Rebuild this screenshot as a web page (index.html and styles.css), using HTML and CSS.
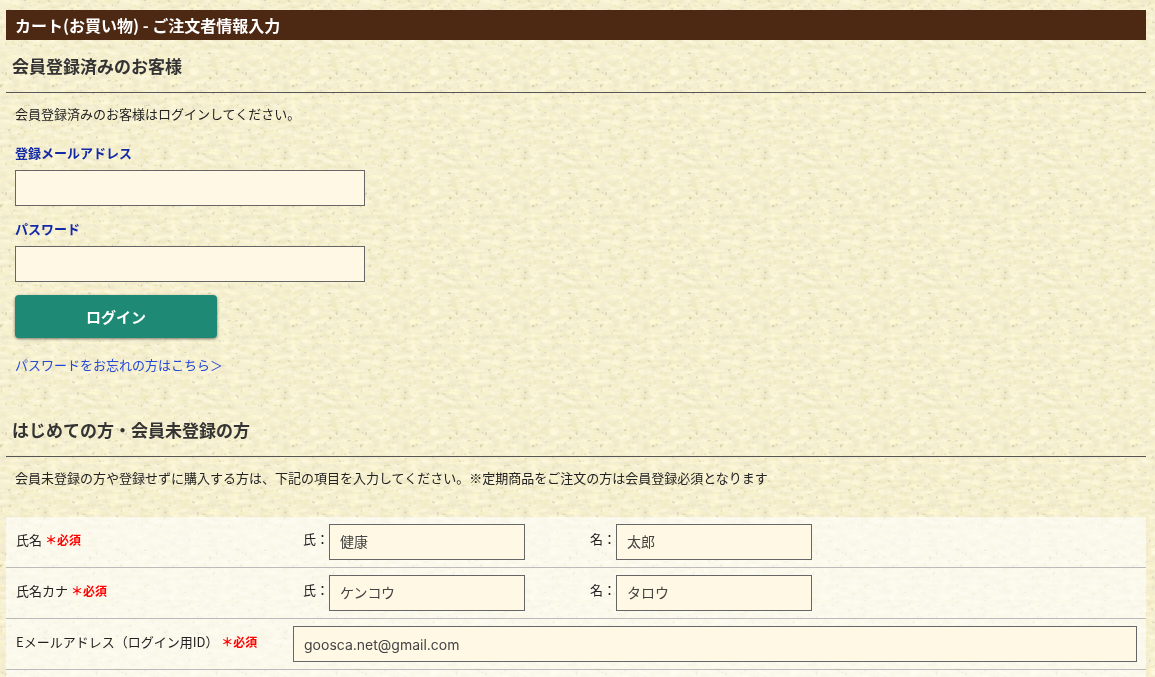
FILE: index.html
```html
<!DOCTYPE html>
<html lang="ja">
<head>
<meta charset="utf-8">
<meta name="viewport" content="width=device-width, initial-scale=1">
<title>カート(お買い物) - ご注文者情報入力</title>
<link rel="stylesheet" href="styles.css">
</head>
<body>
<svg class="paper" aria-hidden="true">
  <defs>
    <filter id="grain" x="0" y="0" width="100%" height="100%" color-interpolation-filters="sRGB">
      <feTurbulence type="fractalNoise" baseFrequency="0.1 0.2" numOctaves="3" seed="8" stitchTiles="stitch"/>
      <feColorMatrix values="0.1 0 0 0 0.913  0.11 0 0 0 0.885  0.12 0.1 0 0 0.705  0 0 0 0 1"/>
    </filter>
    <filter id="specks" x="0" y="0" width="100%" height="100%" color-interpolation-filters="sRGB">
      <feTurbulence type="fractalNoise" baseFrequency="0.25" numOctaves="3" seed="21" stitchTiles="stitch"/>
      <feColorMatrix values="0 0 0 0 0.7  0 0 0 0 0.66  0 0 0 0 0.52  2.6 0 0 0 -1.72"/>
    </filter>
    <pattern id="tile" width="120" height="120" patternUnits="userSpaceOnUse">
      <rect width="120" height="120" filter="url(#grain)"/>
      <rect width="120" height="120" filter="url(#specks)"/>
    </pattern>
  </defs>
  <rect width="100%" height="100%" fill="url(#tile)"/>
</svg>
<main class="page">
  <h1 class="page-title">カート(お買い物) - ご注文者情報入力</h1>

  <section class="section">
    <h2 class="section-title">会員登録済みのお客様</h2>
    <p class="lead">会員登録済みのお客様はログインしてください。</p>
    <form class="login">
      <label class="login-label" for="login-mail">登録メールアドレス</label>
      <input class="field login-field" id="login-mail" type="email">
      <label class="login-label" for="login-pass">パスワード</label>
      <input class="field login-field" id="login-pass" type="password">
      <button class="login-button" type="submit">ログイン</button>
      <a class="forgot" href="#">パスワードをお忘れの方はこちら＞</a>
    </form>
  </section>

  <section class="section section-guest">
    <h2 class="section-title">はじめての方・会員未登録の方</h2>
    <p class="lead">会員未登録の方や登録せずに購入する方は、下記の項目を入力してください。※定期商品をご注文の方は会員登録必須となります</p>
    <form class="guest">
      <div class="row" role="group" aria-labelledby="name-label">
        <div class="row-label" id="name-label">氏名 <strong class="required">＊必須</strong></div>
        <div class="row-body">
          <div class="part"><label for="sei">氏：</label><input class="field" id="sei" type="text" value="健康"></div>
          <div class="part"><label for="mei">名：</label><input class="field" id="mei" type="text" value="太郎"></div>
        </div>
      </div>
      <div class="row" role="group" aria-labelledby="kana-label">
        <div class="row-label" id="kana-label">氏名カナ <strong class="required">＊必須</strong></div>
        <div class="row-body">
          <div class="part"><label for="sei-kana">氏：</label><input class="field" id="sei-kana" type="text" value="ケンコウ"></div>
          <div class="part"><label for="mei-kana">名：</label><input class="field" id="mei-kana" type="text" value="タロウ"></div>
        </div>
      </div>
      <div class="row">
        <label class="row-label" for="mail">Eメールアドレス（ログイン用ID） <strong class="required">＊必須</strong></label>
        <div class="row-body"><input class="field field-wide" id="mail" type="email" value="goosca.net@gmail.com"></div>
      </div>
    </form>
  </section>
</main>
</body>
</html>
```
FILE: styles.css
```css
* {
  box-sizing: border-box;
}

body {
  margin: 0;
  background: #f5efcf;
  color: #222;
  font-family: "Noto Sans CJK JP", sans-serif;
  font-size: 13px;
  line-height: 20px;
}

/* Paper texture behind the whole page */
.paper {
  position: fixed;
  inset: 0;
  z-index: -1;
  width: 100%;
  height: 100%;
}

.page {
  padding: 10px 9px 0 6px;
}

.page-title {
  margin: 0;
  padding: 0 9px;
  background: #4d2813;
  color: #fff;
  font-size: 16px;
  line-height: 30px;
}

.section-title {
  margin: 0;
  padding: 14px 6px;
  border-bottom: 1px solid #555;
  color: #333;
  font-size: 17px;
  line-height: 24px;
}

.section-guest {
  margin-top: 29px;
}

.lead {
  margin: 11px 9px 0;
}

.login {
  display: flex;
  flex-direction: column;
  align-items: flex-start;
  margin: 19px 9px 0;
}

.login-label {
  margin-bottom: 7px;
  color: #1229a8;
  font-weight: 700;
}

.field {
  width: 196px;
  height: 36px;
  padding: 0 10px 3px;
  border: 1px solid #666;
  border-radius: 0;
  background: #fff8e5;
  color: #444;
  font-family: inherit;
  font-size: 14px;
}

.login-field {
  width: 350px;
  max-width: 100%;
  margin-bottom: 13px;
}

.login-button {
  width: 202px;
  height: 43px;
  border: 0;
  border-radius: 4px;
  background: #1e8a76;
  box-shadow: 0 1px 3px rgba(0, 0, 0, 0.5);
  color: #fff;
  font-family: inherit;
  font-size: 15px;
  font-weight: 700;
}

.forgot {
  margin-top: 17px;
  color: #2448d8;
  text-decoration: none;
}

.guest {
  margin-top: 29px;
  padding-bottom: 8px;
  background: rgba(255, 255, 255, 0.6);
}

.row {
  display: grid;
  grid-template-columns: 25% 1fr;
  padding: 7px 0;
  border-bottom: 1px solid #bbb;
}

.row-label {
  padding: 6px 0 0 10px;
}

.required {
  color: #f00;
  font-size: 12px;
}

.row-body {
  display: flex;
  padding: 0 9px 0 2px;
}

.part {
  display: flex;
  width: 34%;
  padding-left: 10px;
}

.part label {
  padding-top: 5px;
}

.field-wide {
  width: 100%;
  padding-bottom: 0;
  font-family: Inter, sans-serif;
}
```
